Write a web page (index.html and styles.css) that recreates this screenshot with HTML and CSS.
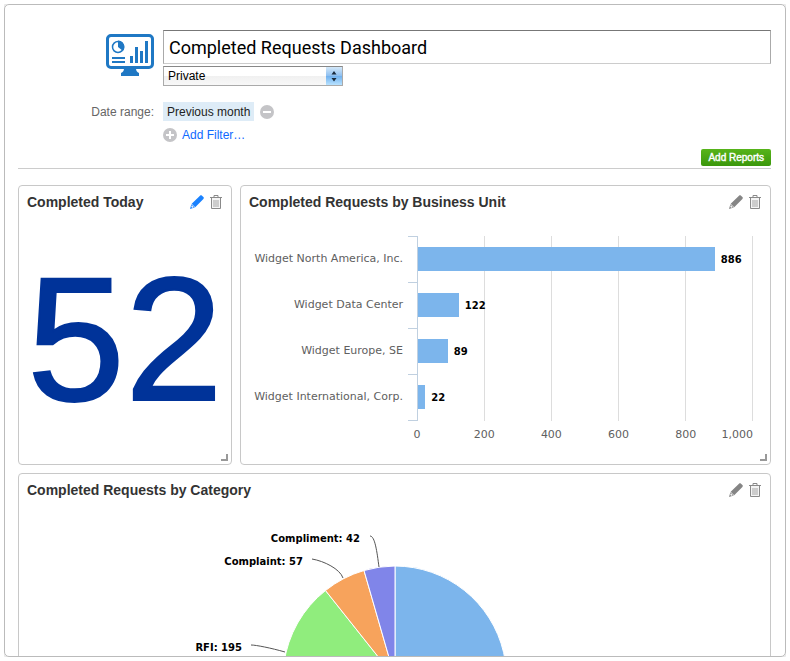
FILE: index.html
```
<!DOCTYPE html>
<html lang="en">
<head>
    <meta charset="UTF-8">
    <meta name="viewport" content="width=device-width, initial-scale=1.0">
    <title>Completed Requests Dashboard</title>
    <link rel="stylesheet" href="styles.css">
</head>
<body>
    <!-- shared icons -->
    <svg class="icon-defs" width="0" height="0">
        <symbol id="icon-pencil" viewBox="0 0 14 14">
            <path fill="currentColor" d="M10 .7c.6-.6 1.400-.6 2 0l1.400 1.400c.6.6.6 1.200 0 1.800L5.200 12.200 1.700 8.700z"/>
            <path fill="currentColor" d="M1.400 9.200l3.400 3.400L0 14z"/>
            <path fill="#fff" d="M1.800 10.300l1.900 1.900-1.500.5-.9-.9z"/>
        </symbol>
        <symbol id="icon-trash" viewBox="0 0 12 14">
            <path fill="none" stroke="#8a8a8a" d="M4 2V.5h4V2M0 2.500h12"/>
            <path fill="#f4f4f4" stroke="#8a8a8a" d="M1.500 3v10.500h9V3"/>
            <path fill="none" stroke="#a5a5a5" d="M4 5v7M6 5v7M8 5v7"/>
        </symbol>
    </svg>

    <div class="window">
        <form class="dashboard-header">
            <svg class="dashboard-icon" width="48" height="42" viewBox="0 0 48 42">
                <rect x="1.500" y="1.500" width="45" height="32" rx="3.500" fill="#fff" stroke="#1f78c4" stroke-width="3"/>
                <path fill="#1f78c4" d="M18 34h12c0 3 1 4 3 5v3H15v-3c2-1 3-2 3-5z"/>
                <circle cx="12" cy="13" r="5.500" fill="none" stroke="#1f78c4" stroke-width="1.500"/>
                <path fill="#1f78c4" d="M12 13V6.500a6.500 6.500 0 0 1 5 10.500z"/>
                <path stroke="#1f78c4" stroke-width="2" d="M6 24h13M6 28h13"/>
                <path stroke="#1f78c4" stroke-width="3" d="M25.500 29v-7M30.500 29V13M35.500 29V17M40.500 29V7"/>
            </svg>
            <div class="name-fields">
                <input class="name-input" type="text" value="Completed Requests Dashboard" aria-label="Dashboard name">
                <div class="select-wrap">
                    <select class="visibility" aria-label="Visibility">
                        <option>Private</option>
                        <option>Shared</option>
                    </select>
                    <svg class="select-arrows" width="16" height="18" viewBox="0 0 16 18">
                        <path fill="#1b2b3d" d="M8 4l2.500 3.500h-5zM8 14.500l2.500-3.500h-5z"/>
                    </svg>
                </div>
            </div>

            <span class="filter-label">Date range:</span>
            <div class="filters">
                <div class="filter-row">
                    <button type="button" class="filter-value">Previous month</button>
                    <button type="button" class="round-button" aria-label="Remove filter">
                        <svg width="14" height="14" viewBox="0 0 14 14"><circle cx="7" cy="7" r="7" fill="#c4c4c7"/><path stroke="#fff" stroke-width="2" d="M3 7h8"/></svg>
                    </button>
                </div>
                <a class="add-filter" href="#">
                    <svg width="14" height="14" viewBox="0 0 14 14"><circle cx="7" cy="7" r="7" fill="#c4c4c7"/><path stroke="#fff" stroke-width="2" d="M3 7h8M7 3v8"/></svg>
                    Add Filter…
                </a>
            </div>
        </form>

        <div class="toolbar">
            <button type="button" class="add-reports">Add Reports</button>
        </div>

        <div class="reports">
            <section class="card">
                <header class="card-header">
                    <h2>Completed Today</h2>
                    <button type="button" class="card-button active" aria-label="Edit"><svg width="14" height="14"><use href="#icon-pencil"/></svg></button>
                    <button type="button" class="card-button" aria-label="Delete"><svg width="12" height="14"><use href="#icon-trash"/></svg></button>
                </header>
                <div class="big-number">52</div>
                <span class="resize"></span>
            </section>

            <section class="card">
                <header class="card-header">
                    <h2>Completed Requests by Business Unit</h2>
                    <button type="button" class="card-button" aria-label="Edit"><svg width="14" height="14"><use href="#icon-pencil"/></svg></button>
                    <button type="button" class="card-button" aria-label="Delete"><svg width="12" height="14"><use href="#icon-trash"/></svg></button>
                </header>
                <div class="bar-chart">
                    <div class="bar-labels">
                        <span>Widget North America, Inc.</span>
                        <span>Widget Data Center</span>
                        <span>Widget Europe, SE</span>
                        <span>Widget International, Corp.</span>
                    </div>
                    <div class="ticks"><i></i><i></i><i></i><i></i></div>
                    <div class="plot">
                        <div class="gridlines"><i></i><i></i><i></i><i></i><i></i></div>
                        <div class="bars">
                            <div class="bar-row"><div class="bar" style="width: 88.6%"></div><b>886</b></div>
                            <div class="bar-row"><div class="bar" style="width: 12.2%"></div><b>122</b></div>
                            <div class="bar-row"><div class="bar" style="width: 8.9%"></div><b>89</b></div>
                            <div class="bar-row"><div class="bar" style="width: 2.2%"></div><b>22</b></div>
                        </div>
                    </div>
                    <div class="x-axis">
                        <span>0</span><span>200</span><span>400</span><span>600</span><span>800</span><span>1,000</span>
                    </div>
                </div>
                <span class="resize"></span>
            </section>

            <section class="card wide">
                <header class="card-header">
                    <h2>Completed Requests by Category</h2>
                    <button type="button" class="card-button" aria-label="Edit"><svg width="14" height="14"><use href="#icon-pencil"/></svg></button>
                    <button type="button" class="card-button" aria-label="Delete"><svg width="12" height="14"><use href="#icon-trash"/></svg></button>
                </header>
                <svg class="pie-chart" width="480" height="290" viewBox="0 0 480 290">
                    <g stroke="#fff" stroke-width="1">
                        <path fill="#7cb5ec" d="M240 171V59a112 112 0 0 1 50 212z"/>
                        <path fill="#434348" d="M240 171l50 100a112 112 0 0 1-140-33z"/>
                        <path fill="#90ed7d" d="M240 171l-90 67a112 112 0 0 1 20.500-154.500z"/>
                        <path fill="#f7a35c" d="M240 171l-69.500-87.500a112 112 0 0 1 38.500-20z"/>
                        <path fill="#8085e9" d="M240 171l-31-107.500a112 112 0 0 1 31-4.500z"/>
                    </g>
                    <g fill="none" stroke="#555">
                        <path d="M215 29c5 0 7 16 9 31"/>
                        <path d="M157 52c12 2 28 10 31 19"/>
                        <path d="M96 138c5 0 20 3 34 7"/>
                    </g>
                    <g class="pie-labels" text-anchor="end">
                        <text x="205" y="35">Compliment: 42</text>
                        <text x="148" y="58">Complaint: 57</text>
                        <text x="87" y="144">RFI: 195</text>
                    </g>
                </svg>
                <span class="resize"></span>
            </section>
        </div>
    </div>
</body>
</html>
```
FILE: styles.css
```
* {
    box-sizing: border-box;
}

body {
    margin: 4px;
    background-color: #fff;
    font-family: "Liberation Sans", Arial, sans-serif;
    font-size: 12px;
    color: #222;
}

button {
    padding: 0;
    border: none;
    background: none;
    font: inherit;
    color: inherit;
    cursor: pointer;
}

svg {
    display: block;
}

.icon-defs {
    position: absolute;
}

.window {
    height: calc(100vh - 8px);
    padding: 25px 14px 0 13px;
    overflow: hidden;
    border: 1px solid #bbb;
    border-radius: 5px;
    box-shadow: 0 0 4px rgba(0, 0, 0, 0.3);
}

/* Header */
.dashboard-header {
    display: grid;
    grid-template-columns: 136px 1fr;
    column-gap: 9px;
    row-gap: 16px;
}

.dashboard-icon {
    justify-self: end;
    margin-top: 4px;
}

.name-input {
    display: block;
    width: 100%;
    height: 34px;
    padding: 0 5px;
    border: 1px solid #aaa;
    border-top-color: #777;
    border-bottom-color: #ccc;
    font-family: Roboto, sans-serif;
    font-size: 18px;
    color: #000;
}

.select-wrap {
    display: grid;
    width: 180px;
    margin-top: 2px;
}

.visibility {
    grid-area: 1 / 1;
    height: 20px;
    padding: 0 4px;
    appearance: none;
    border: 1px solid #aaa;
    border-top-color: #888;
    border-radius: 0;
    background: linear-gradient(#fff 50%, #f0f0f0 50%, #f8f8f8);
    font: inherit;
    color: #000;
}

.select-arrows {
    grid-area: 1 / 1;
    justify-self: end;
    align-self: center;
    margin-right: 1px;
    background: linear-gradient(#d4e8f9, #8dbff0 50%, #6fb0ee 50%, #b8e2ff);
    pointer-events: none;
}

.filter-label {
    line-height: 20px;
    text-align: right;
    color: #666;
}

.filter-row {
    display: flex;
    align-items: center;
    gap: 6px;
}

.filter-value {
    height: 19px;
    padding: 0 4px;
    background-color: #deecf7;
}

.add-filter {
    display: inline-flex;
    align-items: center;
    gap: 5px;
    margin-top: 7px;
    line-height: 14px;
    color: #0f69ff;
    text-decoration: none;
}

.toolbar {
    display: flex;
    justify-content: flex-end;
    margin: 4px 0 16px;
    padding-bottom: 2px;
    border-bottom: 1px solid #ccc;
}

.add-reports {
    height: 17px;
    padding: 0 7px;
    border-radius: 2px;
    background: linear-gradient(#57b41a, #3b970c);
    font-size: 10px;
    -webkit-text-stroke: 0.4px #fff;
    color: #fff;
}

/* Report cards */
.reports {
    display: grid;
    grid-template-columns: 214px 1fr;
    gap: 8px;
}

.card {
    position: relative;
    min-height: 280px;
    padding: 8px;
    border: 1px solid #c8c8c8;
    border-radius: 4px;
}

.wide {
    grid-column: 1 / 3;
}

.card-header {
    display: flex;
    align-items: center;
    gap: 6px;
}

.card-header h2 {
    flex: 1;
    margin: 0;
    font-size: 14px;
    line-height: 16px;
    color: #333;
    white-space: nowrap;
}

.card-button {
    color: #858585;
}

.card-button:last-child {
    margin-right: 1px;
}

.card-button.active {
    color: #1a82ff;
}

.resize {
    position: absolute;
    right: 3px;
    bottom: 3px;
    width: 7px;
    height: 7px;
    border-right: 2px solid #999;
    border-bottom: 2px solid #999;
}

.big-number {
    margin-top: 29px;
    text-align: center;
    font-size: 176px;
    line-height: 200px;
    -webkit-text-stroke: 2px #039;
    color: #039;
}

/* Bar chart */
.bar-chart {
    display: grid;
    grid-template-columns: 154px 14px 1fr;
    margin: 26px 9px 0 0;
    font-family: "DejaVu Sans", sans-serif;
    font-size: 11px;
    color: #606060;
}

.bar-labels {
    text-align: right;
    line-height: 46px;
    white-space: nowrap;
}

.bar-labels span {
    display: block;
}

.ticks {
    margin-left: 5px;
    border-top: 1px solid #c0d0e0;
}

.ticks i {
    display: block;
    height: 46px;
    border-bottom: 1px solid #c0d0e0;
}

.plot {
    display: grid;
    border-left: 1px solid #c0d0e0;
}

.gridlines {
    grid-area: 1 / 1;
    display: grid;
    grid-template-columns: repeat(5, 1fr);
}

.gridlines i {
    border-right: 1px solid #ddd;
}

.bars {
    grid-area: 1 / 1;
}

.bar-row {
    display: flex;
    align-items: center;
    gap: 6px;
    height: 46px;
    font-size: 10px;
    color: #000;
}

.bar {
    height: 24px;
    background-color: #7cb5ec;
}

.x-axis {
    grid-column: 3;
    display: flex;
    justify-content: space-between;
    margin-top: 6px;
    line-height: 16px;
}

.x-axis span {
    display: flex;
    justify-content: center;
    width: 0;
}

.x-axis span:last-child {
    justify-content: flex-end;
}

/* Pie chart */
.pie-chart {
    margin: 9px auto 0;
}

.pie-labels {
    font-family: "DejaVu Sans", sans-serif;
    font-size: 10px;
    font-weight: bold;
    fill: #000;
}
```
